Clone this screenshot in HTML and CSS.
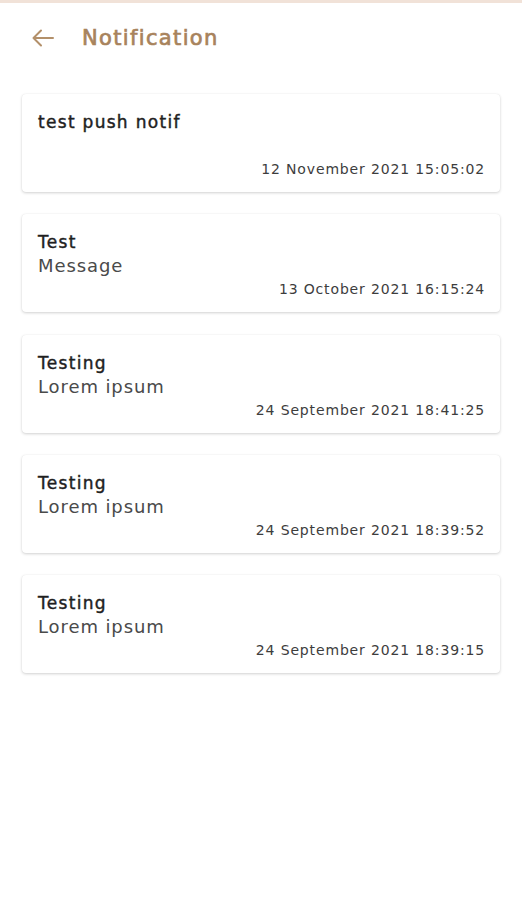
FILE: index.html
```html
<!DOCTYPE html>
<html>
<head>
<meta charset="utf-8">
<link rel="stylesheet" href="styles.css">
</head>
<body>
<div class="topline"></div>
<header class="header">
  <svg class="back" width="24" height="24" viewBox="0 0 24 24"><path d="M22 12H2.5M10 4.5L2.5 12 10 19.5" fill="none" stroke="#b3906a" stroke-width="2" stroke-linecap="round" stroke-linejoin="round"/></svg>
  <h1 class="title">Notification</h1>
</header>
<main class="list">
  <div class="card"><div class="c-title">test push notif</div><div class="c-msg"></div><div class="c-date">12 November 2021 15:05:02</div></div>
  <div class="card"><div class="c-title">Test</div><div class="c-msg">Message</div><div class="c-date">13 October 2021 16:15:24</div></div>
  <div class="card"><div class="c-title">Testing</div><div class="c-msg">Lorem ipsum</div><div class="c-date">24 September 2021 18:41:25</div></div>
  <div class="card"><div class="c-title">Testing</div><div class="c-msg">Lorem ipsum</div><div class="c-date">24 September 2021 18:39:52</div></div>
  <div class="card"><div class="c-title">Testing</div><div class="c-msg">Lorem ipsum</div><div class="c-date">24 September 2021 18:39:15</div></div>
</main>
</body>
</html>
```
FILE: styles.css
```css
* { box-sizing: border-box; }
body { margin: 0; background: #fff; font-family: "DejaVu Sans", sans-serif; }
.topline { height: 3px; background: #f1e2d8; }
.header { display: flex; align-items: center; height: 70px; padding: 0 0 0 31px; }
.back { display: block; margin-right: 27px; }
.title { margin: 0; font-size: 21px; font-weight: normal; -webkit-text-stroke: 0.7px #a8835c; color: #a8835c; letter-spacing: 1.35px; }
.list { display: flex; flex-direction: column; gap: 22.25px; padding: 21px 22px 40px 22px; }
.card { background: #fff; border-radius: 4px; box-shadow: 0 1px 3px rgba(0,0,0,0.18), 0 0 1px rgba(0,0,0,0.08); padding: 16px 15px 11px 16px; }
.c-title { font-size: 17px; color: #1f1f1f; -webkit-text-stroke: 0.45px #1f1f1f; letter-spacing: 1.3px; line-height: 25px; }
.c-msg { font-size: 18px; color: #4a4a4a; letter-spacing: 0.9px; line-height: 22px; height: 22px; }
.c-date { font-size: 14px; color: #3d3d3d; letter-spacing: 0.85px; line-height: 24px; text-align: right; }
```
